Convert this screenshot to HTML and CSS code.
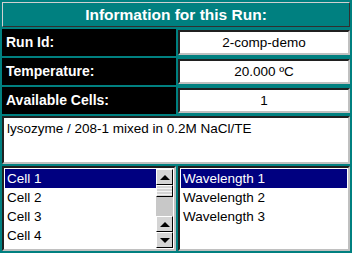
FILE: index.html
```html
<!DOCTYPE html>
<html lang="en">

<head>
    <meta charset="UTF-8">
    <title>Information for this Run</title>
    <link rel="stylesheet" href="styles.css">
</head>

<body>
    <div class="panel">
        <div class="title">Information for this Run:</div>
        <div class="row">
            <div class="label">Run Id:</div>
            <div class="value">2-comp-demo</div>
        </div>
        <div class="row">
            <div class="label">Temperature:</div>
            <div class="value">20.000 ºC</div>
        </div>
        <div class="row">
            <div class="label">Available Cells:</div>
            <div class="value">1</div>
        </div>
        <div class="notes">lysozyme / 208-1 mixed in 0.2M NaCl/TE</div>
        <div class="lists">
            <div class="list cell-list">
                <div class="items">
                    <div class="item selected">Cell 1</div>
                    <div class="item">Cell 2</div>
                    <div class="item">Cell 3</div>
                    <div class="item">Cell 4</div>
                </div>
                <div class="scrollbar">
                    <div class="sb-btn"><span class="arrow-up"></span></div>
                    <div class="sb-thumb"></div>
                    <div class="sb-track"></div>
                    <div class="sb-btn"><span class="arrow-up"></span></div>
                    <div class="sb-btn"><span class="arrow-down"></span></div>
                </div>
            </div>
            <div class="list">
                <div class="items">
                    <div class="item selected">Wavelength 1</div>
                    <div class="item">Wavelength 2</div>
                    <div class="item">Wavelength 3</div>
                </div>
            </div>
        </div>
    </div>
</body>

</html>
```
FILE: styles.css
```css
body {
    margin: 0;
    background-color: #008080;
    font-family: "Liberation Sans", Arial, sans-serif;
    font-size: 13.5px;
}

.panel {
    display: flex;
    flex-direction: column;
    gap: 2px;
    padding: 2px;
    height: 249px;
}

.title {
    height: 23px;
    border: 1px solid;
    border-color: #d0d0d0 #303030 #303030 #d0d0d0;
    color: white;
    font-weight: bold;
    font-size: 15.5px;
    text-align: center;
    line-height: 23px;
}

.row {
    display: grid;
    grid-template-columns: 174px 1fr;
    gap: 2px;
    height: 27px;
}

.label {
    background-color: black;
    color: white;
    font-weight: bold;
    font-size: 14px;
    padding-left: 4px;
    line-height: 27px;
}

.value, .notes, .list {
    background-color: white;
    border: 2px solid;
    border-color: #202020 #c0c0c0 #c0c0c0 #202020;
}

.value {
    margin: 1px 0;
    text-align: center;
    line-height: 21px;
}

.notes {
    box-sizing: border-box;
    height: 48px;
    padding: 3px 3px;
}

.lists {
    flex: 1;
    display: grid;
    grid-template-columns: 174px 1fr;
    gap: 2px;
}

.list {
    display: flex;
    padding: 1px;
}

.items {
    flex: 1;
}

.item {
    height: 19px;
    line-height: 19px;
    padding-left: 2px;
}

.selected {
    background-color: #000080;
    color: white;
}

.scrollbar {
    width: 17px;
    display: flex;
    flex-direction: column;
    background-color: #c8c8c8;
}

.sb-btn, .sb-thumb {
    height: 14px;
    background-color: #d4d4d4;
    border: 1px solid;
    border-color: #ffffff #000000 #000000 #ffffff;
    display: flex;
    align-items: center;
    justify-content: center;
}

.sb-thumb {
    height: 10px;
    background: repeating-linear-gradient(#d4d4d4 0 2px, #f4f4f4 2px 3px);
}

.sb-track {
    flex: 1;
}

.arrow-up, .arrow-down {
    width: 0;
    height: 0;
    border-left: 5px solid transparent;
    border-right: 5px solid transparent;
}

.arrow-up {
    border-bottom: 5px solid black;
}

.arrow-down {
    border-top: 5px solid black;
}
```
